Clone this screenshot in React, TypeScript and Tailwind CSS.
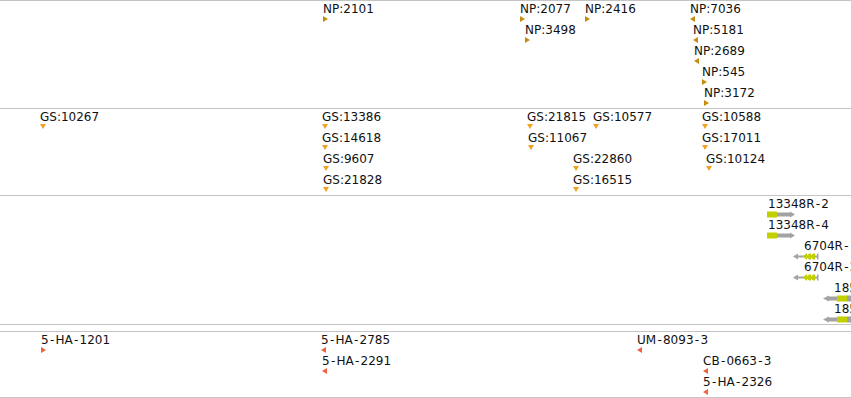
type Strand = "fwd" | "rev" | "down"

interface Feat {
  label: string
  x: number
  row: number
  strand: Strand
}

const npFeats: Feat[] = [
  { label: "NP:2101", x: 323, row: 0, strand: "fwd" },
  { label: "NP:2077", x: 520, row: 0, strand: "fwd" },
  { label: "NP:3498", x: 525, row: 1, strand: "fwd" },
  { label: "NP:2416", x: 585, row: 0, strand: "fwd" },
  { label: "NP:7036", x: 690, row: 0, strand: "rev" },
  { label: "NP:5181", x: 693, row: 1, strand: "rev" },
  { label: "NP:2689", x: 694, row: 2, strand: "rev" },
  { label: "NP:545", x: 702, row: 3, strand: "fwd" },
  { label: "NP:3172", x: 704, row: 4, strand: "fwd" },
]

const gsFeats: Feat[] = [
  { label: "GS:10267", x: 40, row: 0, strand: "down" },
  { label: "GS:13386", x: 322, row: 0, strand: "down" },
  { label: "GS:14618", x: 322, row: 1, strand: "down" },
  { label: "GS:9607", x: 323, row: 2, strand: "down" },
  { label: "GS:21828", x: 323, row: 3, strand: "down" },
  { label: "GS:21815", x: 527, row: 0, strand: "down" },
  { label: "GS:11067", x: 528, row: 1, strand: "down" },
  { label: "GS:10577", x: 593, row: 0, strand: "down" },
  { label: "GS:22860", x: 573, row: 2, strand: "down" },
  { label: "GS:16515", x: 573, row: 3, strand: "down" },
  { label: "GS:10588", x: 702, row: 0, strand: "down" },
  { label: "GS:17011", x: 702, row: 1, strand: "down" },
  { label: "GS:10124", x: 706, row: 2, strand: "down" },
]

const haFeats: Feat[] = [
  { label: "5-HA-1201", x: 41, row: 0, strand: "fwd" },
  { label: "5-HA-2785", x: 321, row: 0, strand: "rev" },
  { label: "5-HA-2291", x: 322, row: 1, strand: "rev" },
  { label: "UM-8093-3", x: 637, row: 0, strand: "rev" },
  { label: "CB-0663-3", x: 703, row: 1, strand: "rev" },
  { label: "5-HA-2326", x: 703, row: 2, strand: "rev" },
]

function Label({ text }: { text: string }) {
  const parts = text.split("-")
  return (
    <div className="whitespace-nowrap text-[12px] leading-[14px] text-[#111]">
      {parts.map((p, i) => (
        <span key={i}>
          {i > 0 && <span className="px-[1.25px]">-</span>}
          {p}
        </span>
      ))}
    </div>
  )
}

function Marker({ strand, color }: { strand: Strand; color: string }) {
  if (strand === "down") {
    return (
      <svg width="6" height="5" className="block">
        <polygon points="0,0 6,0 3,5" fill={color} />
      </svg>
    )
  }
  return (
    <svg width="5" height="6" className="block">
      <polygon points={strand === "fwd" ? "0,0 5,3 0,6" : "5,0 0,3 5,6"} fill={color} />
    </svg>
  )
}

function FeatureLabel({ f, color }: { f: Feat; color: string }) {
  return (
    <div className="absolute" style={{ left: f.x, top: 1 + f.row * 21 }}>
      <Label text={f.label} />
      <Marker strand={f.strand} color={color} />
    </div>
  )
}

const LIME = "#c3d000"
const GREY = "#a3a3a3"

function FwdGene() {
  return (
    <svg width="30" height="7" className="block">
      <rect x="0" y="0.5" width="10" height="6" fill={LIME} />
      <rect x="10" y="1.5" width="14" height="4" fill={GREY} />
      <polygon points="23,0.5 28,3.5 23,6.5" fill={GREY} />
    </svg>
  )
}

function RevChevronGene() {
  return (
    <svg width="27" height="7" className="block">
      <polygon points="0,3.5 5,0.5 5,6.5" fill={GREY} />
      <rect x="4" y="2.5" width="7" height="2" fill={GREY} />
      <polygon points="10,3.5 13,0.5 14,0.5 14,6.5 13,6.5" fill={LIME} />
      <polygon points="13,3.5 16,0.5 18,0.5 18,6.5 16,6.5" fill={LIME} />
      <polygon points="17,3.5 20,0.5 22,0.5 22,6.5 20,6.5" fill={LIME} />
      <rect x="22" y="2.5" width="3" height="2" fill={GREY} />
      <rect x="24" y="0.5" width="1.5" height="6" fill={GREY} />
    </svg>
  )
}

function RevBoxGene() {
  return (
    <svg width="30" height="7" className="block">
      <polygon points="0,3.5 6,0.5 6,6.5" fill={GREY} />
      <rect x="5" y="1.5" width="9" height="4" fill={GREY} />
      <rect x="14" y="0.5" width="10" height="6" fill={LIME} />
      <rect x="24" y="0.5" width="6" height="6" fill={GREY} />
    </svg>
  )
}

const genes = [
  { label: "13348R-2", x: 768, gx: 767, row: 0, kind: "fwd" },
  { label: "13348R-4", x: 768, gx: 767, row: 1, kind: "fwd" },
  { label: "6704R-1", x: 804, gx: 793, row: 2, kind: "chev" },
  { label: "6704R-2", x: 804, gx: 793, row: 3, kind: "chev" },
  { label: "18502R-1", x: 834, gx: 823, row: 4, kind: "box" },
  { label: "18502R-2", x: 834, gx: 823, row: 5, kind: "box" },
]

function Line() {
  return <div className="h-px w-full bg-[#c4c4c4]" />
}

export default function App() {
  return (
    <div className="flex h-[398px] w-[851px] flex-col overflow-hidden bg-white font-['DejaVu_Sans',sans-serif]">
      <Line />
      <div className="relative h-[107px]">
        {npFeats.map((f) => (
          <FeatureLabel key={f.label} f={f} color="#c88d0c" />
        ))}
      </div>
      <Line />
      <div className="relative h-[86px]">
        {gsFeats.map((f) => (
          <FeatureLabel key={f.label} f={f} color="#f3a21e" />
        ))}
      </div>
      <Line />
      <div className="relative h-[128px]">
        {genes.map((g) => (
          <div key={g.label} className="absolute" style={{ left: g.gx, top: 1 + g.row * 21 }}>
            <div style={{ marginLeft: g.x - g.gx }}>
              <Label text={g.label} />
            </div>
            {g.kind === "fwd" && <FwdGene />}
            {g.kind === "chev" && <RevChevronGene />}
            {g.kind === "box" && <RevBoxGene />}
          </div>
        ))}
      </div>
      <Line />
      <div className="h-[6px]" />
      <Line />
      <div className="relative h-[65px]">
        {haFeats.map((f) => (
          <FeatureLabel key={f.label} f={f} color="#f2603f" />
        ))}
      </div>
      <Line />
    </div>
  )
}
